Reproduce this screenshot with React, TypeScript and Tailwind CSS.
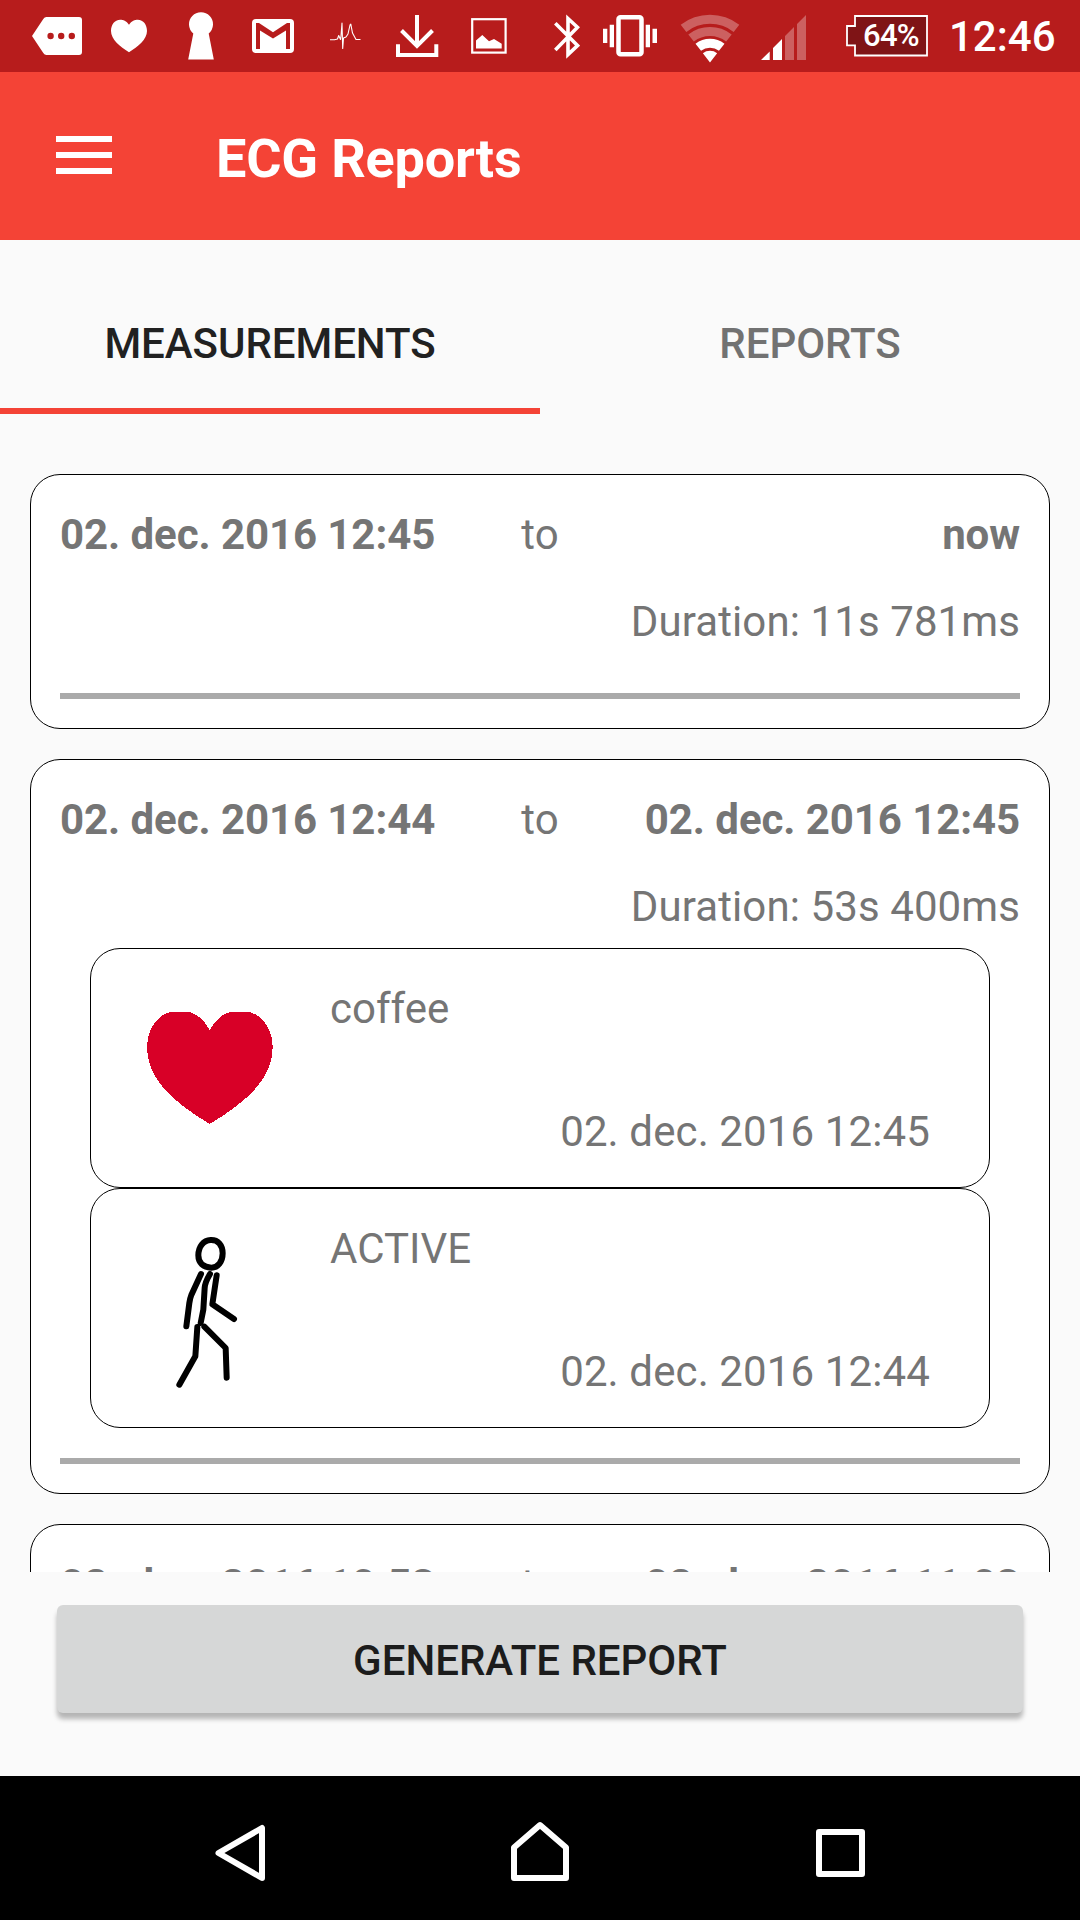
import React from "react";

const statusIcons = [
  {
    name: "message",
    className: "ml-8",
    width: 50,
    icon: (
      <path
        fill="#fff"
        fillRule="evenodd"
        d="M14.500 17H47Q50 17 50 20V52Q50 55 47 55H14.500Q12.500 55 11.300 53L0 36L11.300 19Q12.500 17 14.500 17ZM15.400 36a3.200 3.200 0 1 0 6.400 0a3.200 3.200 0 1 0-6.400 0ZM26 36a3.200 3.200 0 1 0 6.400 0a3.200 3.200 0 1 0-6.400 0ZM36.600 36a3.200 3.200 0 1 0 6.400 0a3.200 3.200 0 1 0-6.400 0Z"
      />
    ),
  },
  {
    name: "heart",
    className: "ml-[29px]",
    width: 36,
    icon: (
      <path
        fill="#fff"
        d="M18 24.800C15.500 21 12 19.800 9.300 19.800C3.500 19.800 0 25 0 31C0 39.500 9 46.500 18 52.200C27 46.500 36 39.500 36 31C36 25 32.500 19.800 26.700 19.800C24 19.800 20.500 21 18 24.800Z"
      />
    ),
  },
  {
    name: "keyhole",
    className: "ml-[41px]",
    width: 26,
    icon: (
      <path fill="#fff" d="M5.300 33.500A12 12 0 1 1 20.700 33.500L25.800 59.500H0.200Z" />
    ),
  },
  {
    name: "mail",
    className: "ml-[38px]",
    width: 42,
    icon: (
      <>
        <rect y="19" width="42" height="34" rx="4" fill="#fff" />
        <path fill="#b71c1c" d="M4 49V23H7L21 32.300L35 23H38V49H34V30.500L21 38.500L8 30.500V49Z" />
      </>
    ),
  },
  {
    name: "ecg",
    className: "ml-[35px]",
    width: 33,
    icon: (
      <path
        fill="none"
        stroke="#fff"
        strokeWidth="1.100"
        strokeLinejoin="round"
        d="M1 39.800H5.500L8.500 39L9.700 35.500L11.500 39.500L12 36L13 23L13.700 48.500L14.500 38L17 37L19 34L21 25L21.800 24.200L23.500 33L27 39.500H31.500"
      />
    ),
  },
  {
    name: "download",
    className: "ml-[34px]",
    width: 43,
    icon: (
      <path
        fill="none"
        stroke="#fff"
        strokeWidth="4"
        d="M21 15V46M5.500 30.500L21 46L36.500 30.500M2 44.300V55H40.300V44.300"
      />
    ),
  },
  {
    name: "image",
    className: "ml-8",
    width: 36,
    icon: (
      <>
        <rect x="1.200" y="19.200" width="33.400" height="33.400" fill="none" stroke="#fff" strokeWidth="2.200" />
        <path fill="#fff" d="M5 48.500V40.500L11.300 35L18 41.300L23 39L30.700 43.700V48.500Z" />
      </>
    ),
  },
  {
    name: "bluetooth",
    className: "ml-[47px]",
    width: 26,
    icon: (
      <path
        fill="none"
        stroke="#fff"
        strokeWidth="3.600"
        d="M1.300 23.200L23.500 45.600L14 54.500V18.500L23.500 27.300L1.300 50"
      />
    ),
  },
  {
    name: "vibrate",
    className: "ml-[23px]",
    width: 54,
    icon: (
      <>
        <rect x="15.500" y="17.300" width="23" height="37" rx="2" fill="none" stroke="#fff" strokeWidth="4.500" />
        <path fill="#fff" d="M6.700 24.700H11V47.300H6.700ZM0 28.700H4.300V43H0ZM42.700 24.700H47V47.300H42.700ZM49.500 28.700H54V43H49.500Z" />
      </>
    ),
  },
  {
    name: "wifi",
    className: "ml-[23px]",
    width: 60,
    icon: (
      <>
        <path
          fill="#fff"
          fillOpacity="0.300"
          d="M0.700 24.700A47.700 47.700 0 0 1 59.300 24.700L53.650 31.900A38.500 38.500 0 0 0 6.350 31.900ZM8.320 34.450A35.300 35.300 0 0 1 51.680 34.450L46.150 41.550A26.300 26.300 0 0 0 13.850 41.550Z"
        />
        <path
          fill="#fff"
          d="M15.500 43.700A23.600 23.600 0 0 1 44.500 43.700L38.970 50.800A14.600 14.600 0 0 0 21.030 50.800ZM22.870 53.150A11.600 11.600 0 0 1 37.130 53.150L30 62.500Z"
        />
      </>
    ),
  },
  {
    name: "signal",
    className: "ml-[21px]",
    width: 45,
    icon: (
      <>
        <path fill="#fff" d="M0 60L8.700 51.500V60ZM12 60V48L21 39V60Z" />
        <path fill="#fff" fillOpacity="0.300" d="M24 60V36L33 27V60ZM36 60V24L45 15V60Z" />
      </>
    ),
  },
];

const measurements = [
  {
    from: "02. dec. 2016 12:45",
    to: "now",
    duration: "11s 781ms",
    events: [],
  },
  {
    from: "02. dec. 2016 12:44",
    to: "02. dec. 2016 12:45",
    duration: "53s 400ms",
    events: [
      { label: "coffee", icon: "heart", date: "02. dec. 2016 12:45" },
      { label: "ACTIVE", icon: "walk", date: "02. dec. 2016 12:44" },
    ],
  },
  {
    from: "02. dec. 2016 10:53",
    to: "02. dec. 2016 11:03",
    duration: "",
    events: [],
  },
];

const HeartIcon = () => (
  <svg className="w-[180px] h-[180px]" viewBox="120 978 180 180" shapeRendering="crispEdges">
    <path
      fill="#d80027"
      d="M209.700 1030C204 1019 195 1011.800 185 1011.500H174C160 1012 147 1027 147 1047C147 1076 168 1099 209.700 1124C251.500 1099 272.700 1076 272.700 1047C272.700 1027 259.500 1012 245.500 1011.500H234.500C224.500 1011.800 215.500 1019 209.700 1030Z"
    />
  </svg>
);

const WalkIcon = () => (
  <svg className="w-[180px] h-[180px]" viewBox="180 115 540 540">
    <g fill="none" stroke="#000" strokeWidth="18" strokeLinecap="round" strokeLinejoin="round">
      <path d="M452 181C474 180 488 196 488 221C488 246 474 264 454 264C430 263 415 250 415 227C415 201 430 182 452 181Z" />
      <path d="M423 283L394 346Q390 356 388 370L379 440" />
      <path d="M450 283C440 300 435 308 434 325L430 390L422 430" />
      <path d="M470 287L457 374L522 418" />
      <path d="M412 442L406 530L358 615" />
      <path d="M433 441L497 505L500 594" />
    </g>
  </svg>
);

const StatusBar = () => (
  <div className="flex h-[72px] shrink-0 items-center bg-[#b71c1c] text-white">
    {statusIcons.map(({ name, className, width, icon }) => (
      <svg key={name} className={`${className} shrink-0`} width={width} height="72" viewBox={`0 0 ${width} 72`}>
        {icon}
      </svg>
    ))}
    <div className="relative ml-10 h-[72px] w-[82px] shrink-0">
      <svg className="absolute inset-0" width="82" height="72" viewBox="0 0 82 72">
        <path
          fill="#7f1416"
          stroke="#fff"
          strokeWidth="1.800"
          d="M9 16H81V55.500H9V45.300H1V26H9Z"
        />
      </svg>
      <span className="absolute left-[17px] top-[18px] text-[31px] leading-[36px] font-medium tracking-[-0.7px]">64%</span>
    </div>
    <span className="ml-[21px] mt-[2px] text-[42px] leading-[48px] font-medium">12:46</span>
  </div>
);

const Toolbar = () => (
  <header className="flex h-[168px] shrink-0 items-center bg-[#f44336] pl-14 text-white">
    <div className="flex w-14 flex-col gap-[10px] -mt-[2px]">
      <div className="h-[6px] bg-white" />
      <div className="h-[6px] bg-white" />
      <div className="h-[6px] bg-white" />
    </div>
    <h1 className="ml-[104px] mt-[6px] text-[54px] leading-[64px] font-bold tracking-[-0.2px]">ECG Reports</h1>
  </header>
);

const Tabs = () => (
  <nav className="flex h-[174px] shrink-0 text-center text-[42px] leading-[48px] font-medium tracking-[-0.05px]">
    <div className="flex-1 border-b-[6px] border-[#f44336] pt-20 text-[#212121]">MEASUREMENTS</div>
    <div className="flex-1 pt-20 text-[#727272]">REPORTS</div>
  </nav>
);

const App = () => {
  return (
    <div
      className="flex h-[1920px] w-[1080px] flex-col overflow-hidden bg-[#fafafa]"
      style={{ fontFamily: "Roboto, sans-serif" }}>
      <StatusBar />
      <Toolbar />
      <Tabs />

      <ul className="mx-[30px] flex h-[1158px] shrink-0 flex-col gap-[30px] overflow-hidden pt-[60px] text-[42px] leading-[48px] text-[#757575]">
        {measurements.map(({ from, to, duration, events }) => (
          <li key={from} className="shrink-0 rounded-[30px] border border-black bg-white px-[29px] pt-[15px] pb-[29px]">
            <div className="grid h-[90px] grid-cols-[1fr_auto_1fr] items-center">
              <span className="font-bold tracking-[-0.08px]">{from}</span>
              <span>to</span>
              <span className="text-right font-bold tracking-[-0.08px]">{to}</span>
            </div>
            <div className="flex h-[83px] items-center justify-end tracking-[0.1px]">
              {duration && <span>Duration: {duration}</span>}
            </div>
            <ul className="mx-[30px]">
              {events.map(({ label, icon, date }) => (
                <li key={label} className="flex h-[240px] rounded-[30px] border border-black pl-[29px] pr-[59px]">
                  <div className="mt-[29px] w-[180px]">
                    {icon === "heart" ? <HeartIcon /> : <WalkIcon />}
                  </div>
                  <div className="ml-[30px] flex flex-1 flex-col justify-between pt-[36px] pb-[31px]">
                    <span>{label}</span>
                    <span className="text-right tracking-[0.12px]">{date}</span>
                  </div>
                </li>
              ))}
            </ul>
            <div className="mt-[30px] h-[6px] bg-[#aaa]" />
          </li>
        ))}
      </ul>

      <div className="flex-1 px-[57px] pt-[33px]">
        <button className="h-[108px] w-full rounded-[6px] bg-[#d6d7d7] pt-[3px] text-[42px] leading-[48px] font-medium text-[#1c1c1c] shadow-[0_6px_5px_rgba(0,0,0,0.28)]">
          GENERATE REPORT
        </button>
      </div>

      <footer className="flex h-36 shrink-0 justify-between bg-black px-[215px]">
        <svg width="50" height="144" viewBox="0 0 50 144" fill="none" stroke="#fff" strokeWidth="6" strokeLinejoin="round">
          <path d="M47 52V102L3.500 77Z" />
        </svg>
        <svg className="ml-[-1px]" width="58" height="144" viewBox="0 0 58 144" fill="none" stroke="#fff" strokeWidth="6" strokeLinejoin="round">
          <path d="M3 102V71.500L29 49L55 71.500V102Z" />
        </svg>
        <svg width="49" height="144" viewBox="0 0 49 144" fill="none" stroke="#fff" strokeWidth="6" strokeLinejoin="round">
          <path d="M3 56H46V98H3Z" />
        </svg>
      </footer>
    </div>
  );
};

export default App;
